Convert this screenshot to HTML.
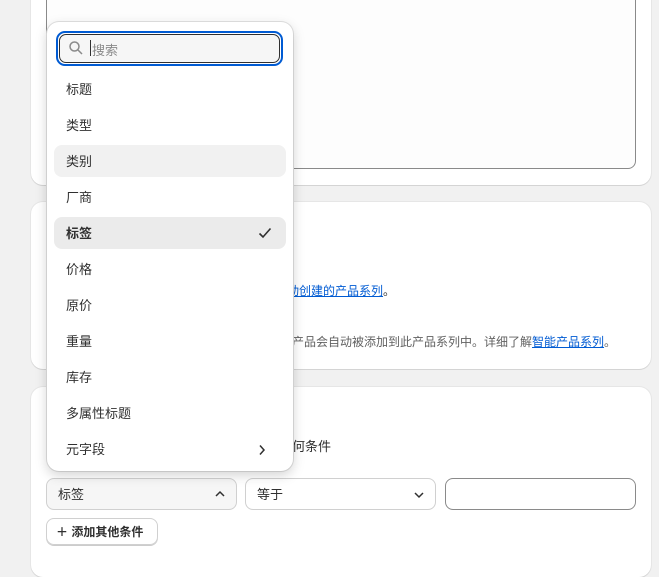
<!DOCTYPE html>
<html><head><meta charset="utf-8"><style>
*{box-sizing:border-box;margin:0;padding:0}
body{width:659px;height:557px;background:#f1f1f1;font-family:"Liberation Sans","Noto Sans CJK SC",sans-serif;font-size:13px;color:#303030;position:relative;overflow:hidden}
.card{position:absolute;left:31px;width:620px;background:#fff;border-radius:12px;box-shadow:0 1px 0 #d4d4d4,0 0 0 1px #e6e6e6}
.ta{position:absolute;left:46px;top:-10px;width:590px;height:179px;background:#fdfdfd;border:1px solid #8a8a8a;border-radius:0 0 8px 8px}
.t{position:absolute;white-space:nowrap}
a{color:#005bd3;text-decoration:underline}
.dd{position:absolute;left:47px;top:22px;width:246px;height:449px;background:#fff;border-radius:12px;box-shadow:0 4px 12px rgba(0,0,0,.18),0 0 0 1px #e3e3e3}
.search{position:absolute;left:9px;top:9px;width:227px;height:35px;border:2px solid #005bd3;border-radius:9px;padding:1px}
.search div{width:100%;height:100%;border:1px solid #303030;border-radius:7px;background:#f6f6f6}
.it{position:absolute;left:7px;width:232px;height:32px;border-radius:8px;line-height:34px;padding-left:12px}
.sel{position:absolute;top:478px;height:32px;border-radius:8px;border:1px solid #d0d0d0;line-height:31px;padding-left:11px}
</style></head><body>
<div class="card" style="top:-20px;height:205px"></div>
<div class="ta"></div>
<div class="card" style="top:202px;height:167px"></div>
<div class="t" style="left:287px;top:282px;font-size:12px"><a>动创建的产品系列</a>。</div>
<div class="t" style="left:292px;top:333px;color:#616161;font-size:12px">产品会自动被添加到此产品系列中。详细了解<a>智能产品系列</a>。</div>
<div class="card" style="top:387px;height:190px"></div>
<div class="t" style="left:292px;top:436px">何条件</div>
<div class="sel" style="left:46px;width:191px;background:#f6f6f6">标签<svg style="position:absolute;right:10px;top:11px" width="12" height="8" viewBox="0 0 12 8"><path d="M2 6L6 2L10 6" fill="none" stroke="#303030" stroke-width="1.5"/></svg></div>
<div class="sel" style="left:245px;width:191px;background:#fff">等于<svg style="position:absolute;right:10px;top:12px" width="12" height="8" viewBox="0 0 12 8"><path d="M2 2L6 6L10 2" fill="none" stroke="#303030" stroke-width="1.5"/></svg></div>
<div class="sel" style="left:445px;width:191px;background:#fff;border-color:#8a8a8a"></div>
<div class="sel" style="left:46px;top:518px;width:112px;height:27px;line-height:26px;padding-left:9px;font-weight:bold;font-size:12px;box-shadow:0 1px 0 #ccc">＋ 添加其他条件</div>
<div class="dd">
<div class="search"><div></div></div>
<svg style="position:absolute;left:21px;top:18px" width="16" height="16" viewBox="0 0 16 16"><circle cx="6.5" cy="6.5" r="4.5" fill="none" stroke="#8a8a8a" stroke-width="1.5"/><path d="M10 10L14 14" stroke="#8a8a8a" stroke-width="1.5"/></svg>
<div style="position:absolute;left:43px;top:18px;width:1px;height:16px;background:#303030"></div>
<div class="t" style="left:45px;top:18px;color:#8a8a8a">搜索</div>
<div class="it" style="top:51px">标题</div>
<div class="it" style="top:87px">类型</div>
<div class="it" style="top:123px;background:#f1f1f1">类别</div>
<div class="it" style="top:159px">厂商</div>
<div class="it" style="top:195px;background:#ebebeb;font-weight:bold">标签<svg style="position:absolute;right:14px;top:9px" width="14" height="14" viewBox="0 0 14 14"><path d="M1.5 7.5L5 11L12.5 2.5" fill="none" stroke="#303030" stroke-width="1.6"/></svg></div>
<div class="it" style="top:231px">价格</div>
<div class="it" style="top:267px">原价</div>
<div class="it" style="top:303px">重量</div>
<div class="it" style="top:339px">库存</div>
<div class="it" style="top:375px">多属性标题</div>
<div class="it" style="top:411px">元字段<svg style="position:absolute;right:20px;top:11px" width="8" height="12" viewBox="0 0 8 12"><path d="M2 1.5L6 6L2 10.5" fill="none" stroke="#303030" stroke-width="1.5"/></svg></div>
</div>
</body></html>
